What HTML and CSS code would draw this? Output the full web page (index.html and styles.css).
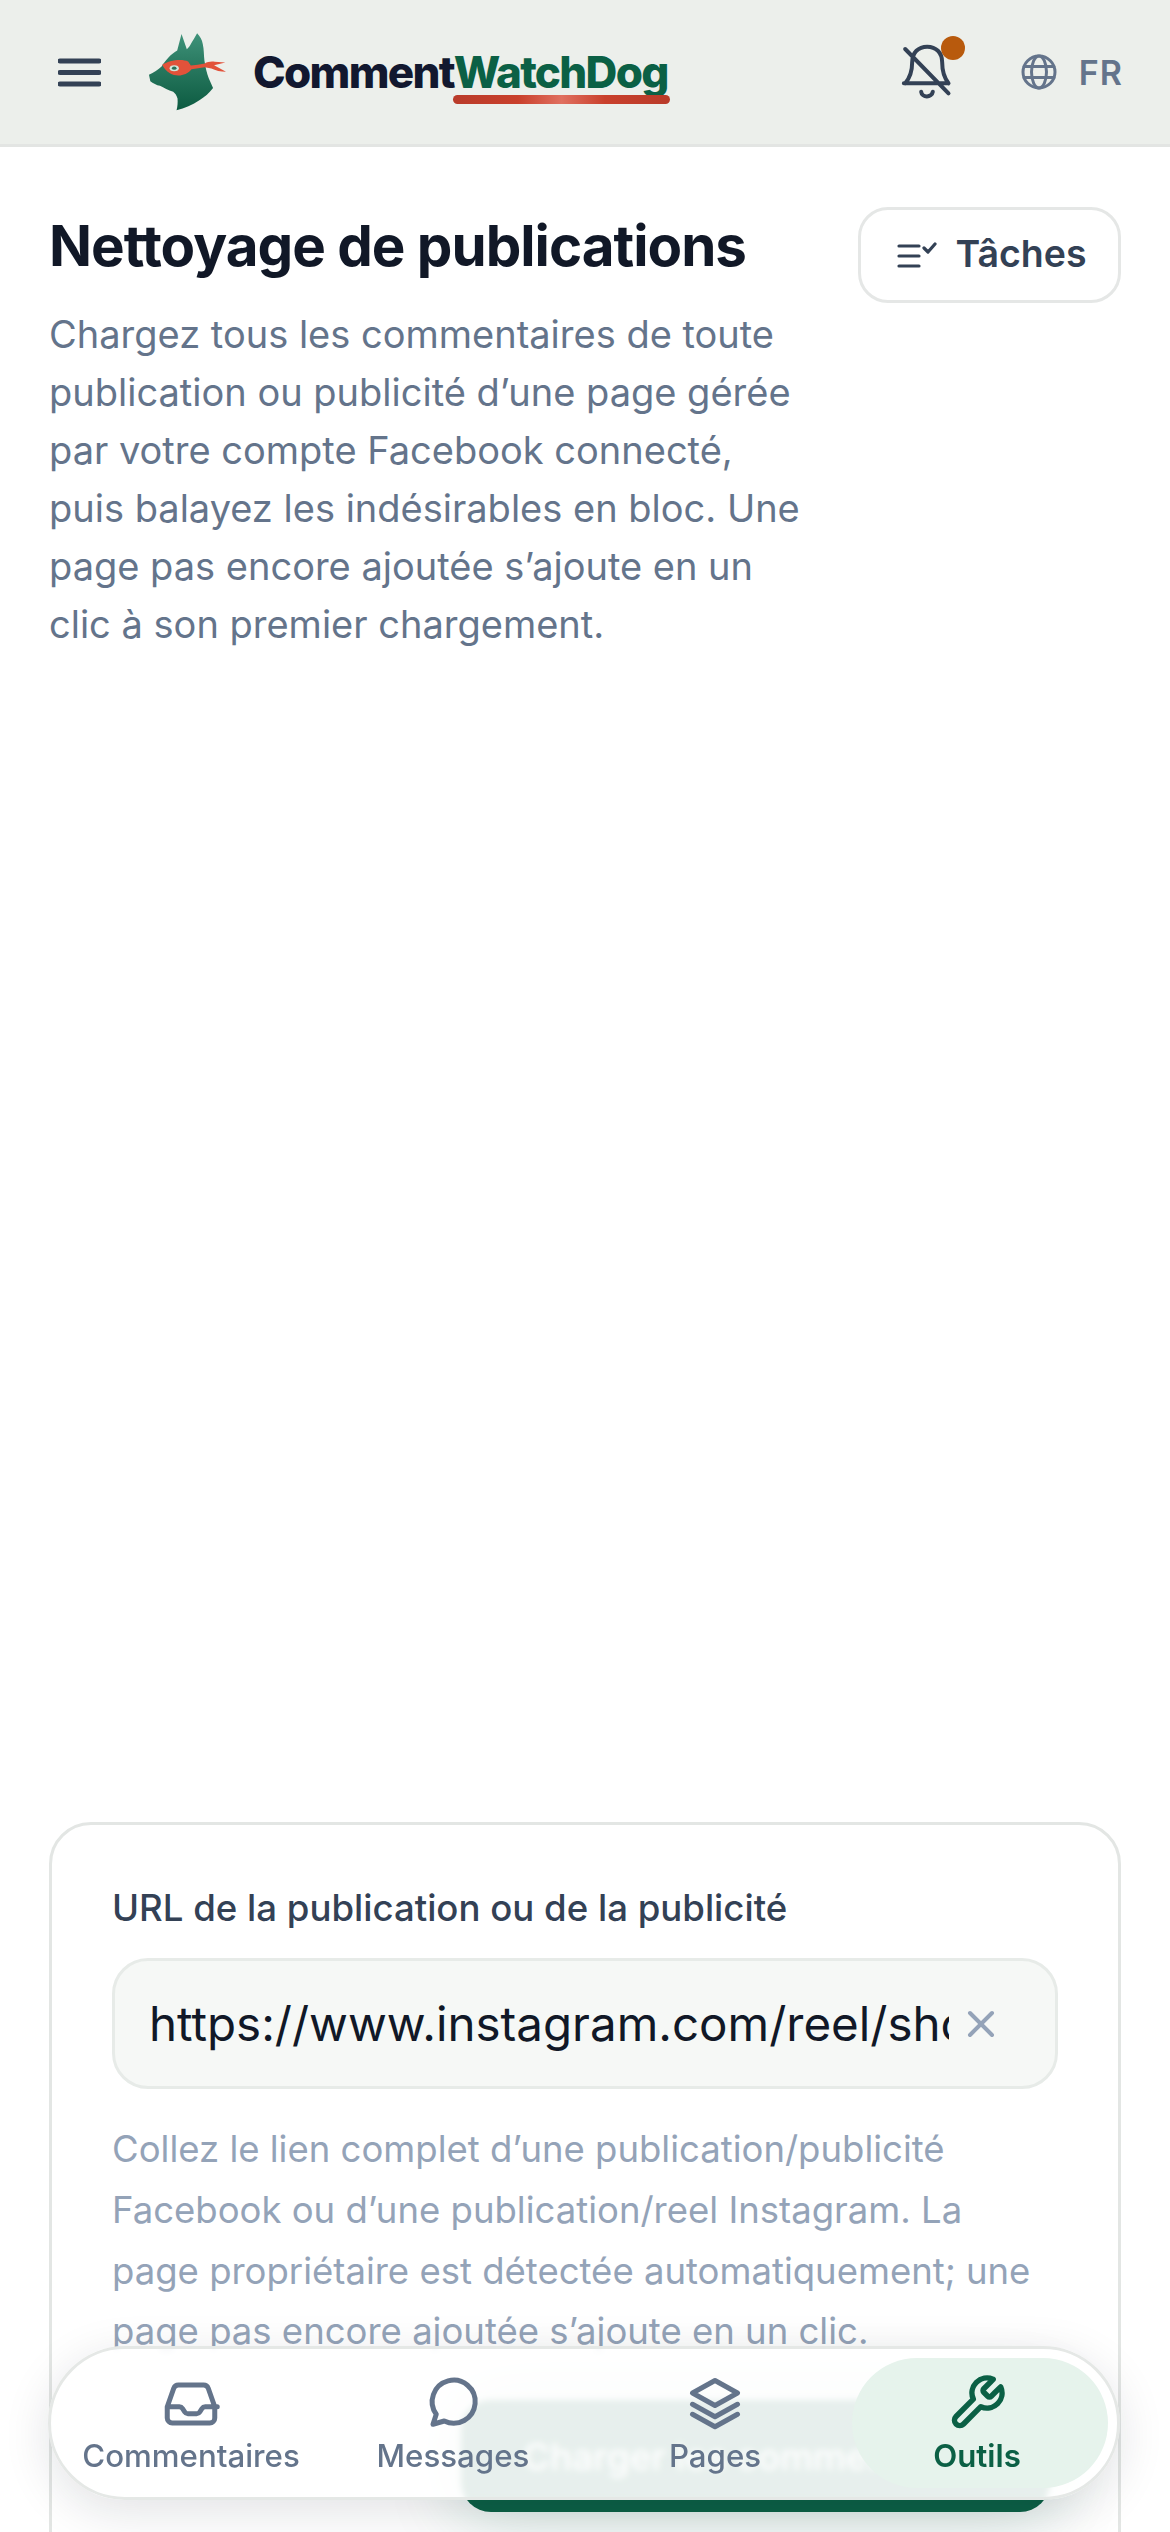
FILE: index.html
```html
<!DOCTYPE html>
<html lang="fr">
<head>
<meta charset="utf-8">
<title>CommentWatchDog</title>
<link rel="stylesheet" href="styles.css">
</head>
<body>
<header class="topbar">
  <button class="menu-btn" aria-label="Menu">
    <svg class="menu-icon" viewBox="0 0 43 29"><path d="M2 3h39M2 14.500h39M2 26h39"/></svg>
  </button>
  <svg class="dog" viewBox="40 30 250 250">
    <defs>
      <linearGradient id="dogfill" x1="0" y1="0" x2="0" y2="1">
        <stop offset="0" stop-color="#3f937a"/>
        <stop offset="0.4" stop-color="#2a7a61"/>
        <stop offset="1" stop-color="#0c5b41"/>
      </linearGradient>
    </defs>
    <path fill="url(#dogfill)" d="M137 92 150 42 166 88C170 84 174 80 176 76 184 62 192 50 197 40 206 50 212 60 214 72 218 90 217 106 219 122 222 142 226 160 232 175L245 205C232 222 220 232 205 241 182 256 160 265 135 272 138 260 139 248 138 236 135 226 130 220 125 216 110 212 97 204 85 198 75 196 64 190 56 184L52 165C66 158 80 150 90 140 100 124 118 102 137 92Z"/>
    <path fill="#e2523a" d="M92 135C110 122 150 115 170 125L178 137C192 136 206 134 220 131 228 126 240 124 250 126L282 128 248 136 284 156C268 156 252 152 240 146L220 142 180 148C165 168 135 172 115 160 104 154 97 146 92 135Z"/>
    <ellipse cx="128" cy="145" rx="14" ry="9" fill="#cfe6da"/>
    <ellipse cx="128" cy="145" rx="7" ry="5" fill="#2a6f58"/>
  </svg>
  <div class="brand-wrap">
    <div class="brand"><span class="brand-a">Comment</span><span class="brand-b">WatchDog</span></div>
    <span class="brand-line"></span>
  </div>
  <div class="top-actions">
    <span class="bell-wrap">
      <svg class="bell" viewBox="300 140 155 168"><path d="M312 258C328 240 333 222 333 195 333 165 352 148 378 148 404 148 423 165 423 195 423 222 428 240 442 258M308 258H442M312 155 442 288M360 283C362 302 392 302 395 283"/></svg>
      <span class="dot"></span>
    </span>
    <span class="lang">
      <svg class="globe" viewBox="0 0 36 36"><circle cx="18" cy="18" r="16"/><ellipse cx="18" cy="18" rx="7.500" ry="16"/><path d="M3 12.500h30M3 23.500h30"/></svg>
      <span>FR</span>
    </span>
  </div>
</header>

<main class="page">
  <section class="hero">
    <div class="hero-text">
      <h1>Nettoyage de publications</h1>
      <p>Chargez tous les commentaires de toute publication ou publicité d’une page gérée par votre compte Facebook connecté, puis balayez les indésirables en bloc. Une page pas encore ajoutée s’ajoute en un clic à son premier chargement.</p>
    </div>
    <button class="tasks">
      <svg class="tasks-icon" viewBox="0 0 40 26"><path d="M2 4h20M2 14h20M2 24h20M27 6l4 4 7-8"/></svg>
      <span>Tâches</span>
    </button>
  </section>

  <section class="card">
    <label class="field-label">URL de la publication ou de la publicité</label>
    <div class="url-box">
      <span class="url-text">https://www.instagram.com/reel/shortcode/</span>
      <svg class="clear" viewBox="0 0 28 28"><path d="M3 3l22 22M25 3 3 25"/></svg>
    </div>
    <p class="help">Collez le lien complet d’une publication/publicité Facebook ou d’une publication/reel Instagram. La page propriétaire est détectée automatiquement; une page pas encore ajoutée s’ajoute en un clic.</p>
    <button class="primary">Charger les commentaires</button>
  </section>
</main>

<nav class="bottom-nav">
  <a class="nav-item">
    <svg viewBox="0 0 24 24"><path d="M2.500 13.500V18a2 2 0 0 0 .6 1.400 2 2 0 0 0 1.400.6h15a2 2 0 0 0 2-2v-4.500M2.500 13.500l2.600-7.400A2 2 0 0 1 7 4.800h10a2 2 0 0 1 1.900 1.300l2.600 7.400M2.500 13.500H7.300a1.500 1.500 0 0 1 1.300.7l.9 1.400a1.500 1.500 0 0 0 1.300.7h3.400a1.500 1.500 0 0 0 1.300-.7l.9-1.400a1.500 1.500 0 0 1 1.300-.7h4.800"/></svg>
    <span>Commentaires</span>
  </a>
  <a class="nav-item">
    <svg viewBox="0 0 24 24"><path d="M4 20.500 5.300 16.500A8.600 8.600 0 1 1 8.500 19.200Z"/></svg>
    <span>Messages</span>
  </a>
  <a class="nav-item">
    <svg viewBox="0 0 24 24"><path d="M12 3 21 8 12 13 3 8ZM3 12.500 12 17.500 21 12.500M3 16.500 12 21.500 21 16.500"/></svg>
    <span>Pages</span>
  </a>
  <a class="nav-item active">
    <svg viewBox="0 0 24 24"><path d="M14.700 6.300a1 1 0 0 0 0 1.400l1.600 1.600a1 1 0 0 0 1.400 0l3.770-3.770a6 6 0 0 1-7.940 7.940l-6.910 6.910a2.120 2.120 0 0 1-3-3l6.910-6.910a6 6 0 0 1 7.940-7.940l-3.760 3.760Z"/></svg>
    <span>Outils</span>
  </a>
</nav>
</body>
</html>
```
FILE: styles.css
```css
* { box-sizing: border-box; }
html, body { margin: 0; height: 100%; overflow: hidden; background: #fff; }
body { font-family: Inter, "Liberation Sans", sans-serif; color: #111827; height: 2532px; }
button { font-family: inherit; background: none; border: 0; padding: 0; }
svg { display: block; fill: none; stroke-linecap: round; stroke-linejoin: round; }

.topbar { height: 147px; display: flex; align-items: center; background: #ecefeb; border-bottom: 3px solid #e3e5e3; padding: 0 47px 0 58px; }
.menu-icon { width: 43px; height: 29px; stroke: #334155; stroke-width: 5; }
.dog { width: 83px; height: 83px; margin: -2px 0 0 44px; }
.brand-wrap { margin-left: 25px; position: relative; }
.brand { font-size: 44px; font-weight: 800; letter-spacing: -1.700px; line-height: 50px; white-space: nowrap; }
.brand-a { color: #12182f; }
.brand-b { color: #0b6045; }
.brand-line { position: absolute; left: 200px; right: -2px; top: 48px; height: 9px; border-radius: 5px; background: linear-gradient(90deg, #b93b2a, #c9402c 30%, #e07060 50%, #c9402c 70%, #b93b2a); }
.top-actions { margin-left: auto; display: flex; align-items: center; }
.bell-wrap { position: relative; display: block; }
.bell { width: 52px; height: 56px; stroke: #334155; stroke-width: 12; }
.dot { position: absolute; left: 40px; top: -8px; width: 24px; height: 24px; border-radius: 50%; background: #b85a0d; }
.lang { display: flex; align-items: center; margin-left: 68px; color: #64748b; font-size: 34px; font-weight: 600; gap: 22px; letter-spacing: 1px; }
.globe { width: 36px; height: 36px; stroke: #64748b; stroke-width: 3; }

.page { padding: 0 49px; }
.hero { display: flex; justify-content: space-between; align-items: flex-start; padding-top: 60px; }
.hero-text { width: 760px; }
h1 { margin: 9px 0 0; font-size: 56.500px; font-weight: 700; line-height: 60px; letter-spacing: -1px; color: #111827; white-space: nowrap; }
.hero-text p { margin: 29px 0 0; font-size: 38px; line-height: 58px; color: #64748b; }
.tasks { width: 263px; height: 96px; border: 3px solid #e5e7e6; border-radius: 30px; display: flex; align-items: center; justify-content: center; gap: 18px; font-size: 37.500px; font-weight: 600; color: #334155; background: #fff; padding: 0 0 3px 5px; }
.tasks-icon { width: 40px; height: 26px; stroke: #334155; stroke-width: 3.200; margin-top: 3px; }

.card { margin-top: 1169px; border: 3px solid #e3e6e4; border-radius: 42px; padding: 59px 60px 60px; height: 900px; display: flex; flex-direction: column; }
.field-label { font-size: 36.600px; font-weight: 500; line-height: 48px; color: #334155; }
.url-box { margin-top: 26px; height: 131px; border: 3px solid #e7ebe8; border-radius: 36px; background: #f6f8f6; display: flex; align-items: center; padding: 0 60px 0 34px; gap: 18px; }
.url-text { flex: 1; min-width: 0; overflow: hidden; white-space: nowrap; font-size: 47.500px; color: #111827; }
.clear { width: 28px; height: 28px; stroke: #94a3b8; stroke-width: 4; flex: none; }
.help { margin: 30px 0 0; font-size: 36.500px; line-height: 60.750px; color: #94a3b8; }
.primary { align-self: flex-start; margin: 38px 0 0 349px; width: 589px; height: 112px; flex: none; border-radius: 30px; background: #0b6045; color: #fff; font-size: 37px; font-weight: 500; box-shadow: 0 0 70px rgba(11, 96, 69, .25); white-space: nowrap; }

.bottom-nav { position: fixed; left: 48px; top: 2346px; width: 1072px; height: 154px; border: 3px solid #e5e8e6; border-radius: 77px; background: rgba(255, 255, 255, .9); backdrop-filter: blur(3px); box-shadow: 0 12px 48px rgba(15, 23, 42, .12); display: grid; grid-template-columns: repeat(4, 1fr); padding: 9px; }
.nav-item { display: flex; flex-direction: column; align-items: center; padding-top: 15px; gap: 3px; font-size: 31.250px; font-weight: 500; color: #64748b; border-radius: 66px; line-height: 40px; }
.nav-item svg { width: 60px; height: 60px; stroke: #64748b; stroke-width: 2; }
.nav-item.active { background: #e6f3ec; color: #0b6045; font-weight: 600; margin-left: 6px; padding-right: 6px; }
.nav-item.active svg { stroke: #0b6045; stroke-width: 2.200; }
```
